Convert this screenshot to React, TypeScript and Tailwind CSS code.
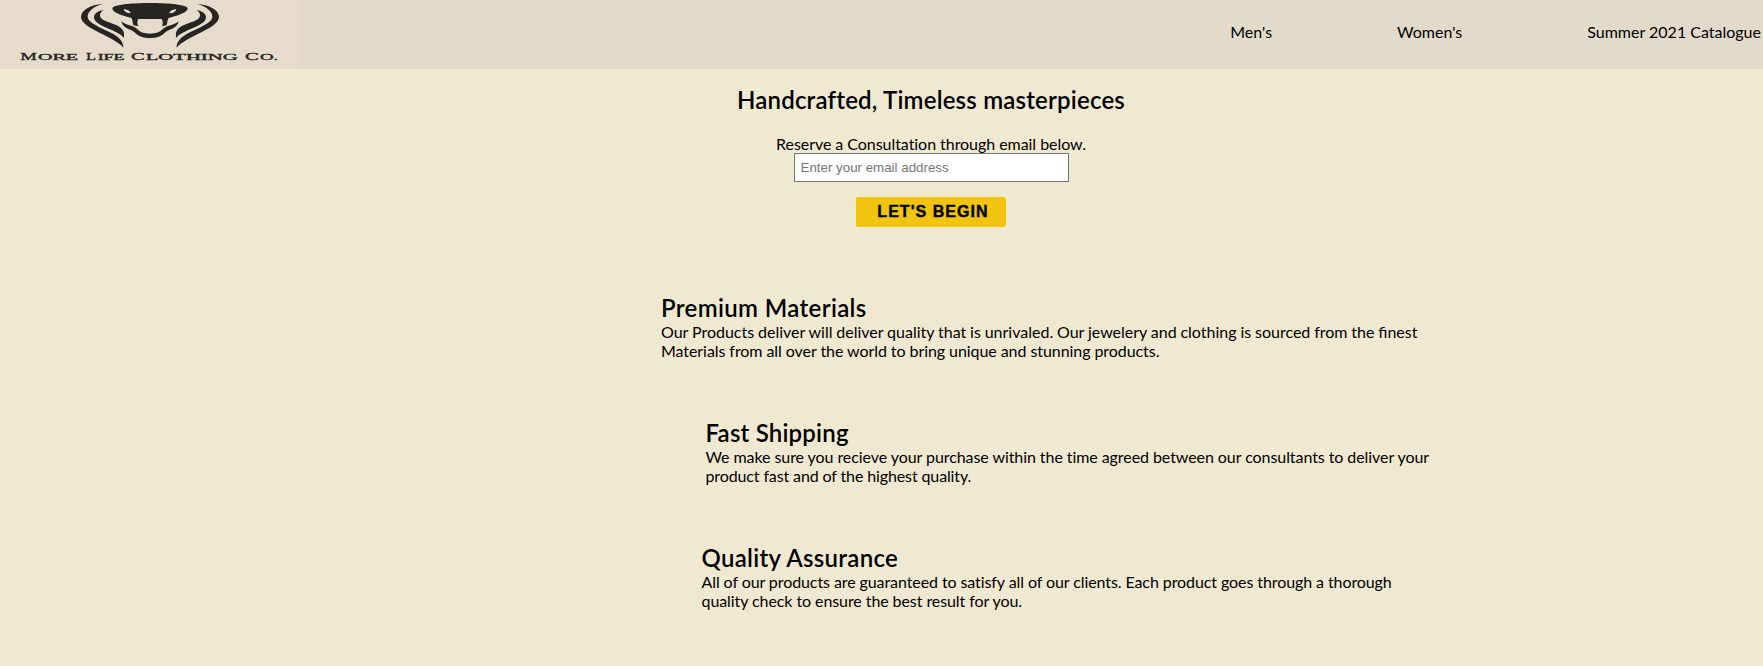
const half = [
  'M309 11 C272 15 243 29 243 51 C244 70 270 84 308 103 C340 119 360 131 370 143 C371 129 362 115 340 102 C310 86 264 70 263 51 C262 34 280 20 309 11 Z',
  'M311 30 C292 33 281 42 282 53 C284 68 306 77 330 88 C350 97 365 104 371 114 C375 97 370 86 350 76 C330 66 306 63 301 51 C298 42 301 36 311 30 Z',
];

const features = [
  {
    title: 'Premium Materials',
    offset: 'ml-[661px]',
    heading: 'tracking-[0.36px]',
    lines: [
      { text: 'Our Products deliver will deliver quality that is unrivaled. Our jewelery and clothing is sourced from the finest', spacing: '[word-spacing:-0.26px]' },
      { text: 'Materials from all over the world to bring unique and stunning products.', spacing: 'tracking-[-0.065px]' },
    ],
  },
  {
    title: 'Fast Shipping',
    offset: 'ml-[705.5px]',
    heading: 'tracking-[0.2px]',
    lines: [
      { text: 'We make sure you recieve your purchase within the time agreed between our consultants to deliver your', spacing: 'tracking-[-0.07px]' },
      { text: 'product fast and of the highest quality.', spacing: 'tracking-[-0.12px]' },
    ],
  },
  {
    title: 'Quality Assurance',
    offset: 'ml-[701.5px]',
    heading: 'tracking-[0.3px]',
    lines: [
      { text: 'All of our products are guaranteed to satisfy all of our clients. Each product goes through a thorough', spacing: 'tracking-[-0.087px]' },
      { text: 'quality check to ensure the best result for you.', spacing: 'tracking-[-0.08px]' },
    ],
  },
];

const words = [
  { first: 'M', rest: 'ORE', x: 61, w: 50, rx: 114, rw: 120 },
  { first: 'L', rest: 'IFE', x: 258, w: 30, rx: 293, rw: 80 },
  { first: 'C', rest: 'LOTHING', x: 393, w: 41, rx: 437, rw: 276 },
  { first: 'C', rest: 'O.', x: 735, w: 41, rx: 780, rw: 55 },
];

function Logo() {
  return (
    <svg className="h-[69px] w-[299px] shrink-0 bg-[#e6dccc]" viewBox="0 0 897 207" fill="#272522">
      {half.map((d) => <path key={d} d={d} />)}
      <g transform="translate(900 0) scale(-1 1)">
        {half.map((d) => <path key={d} d={d} />)}
      </g>
      <path d="M450 9 C400 9 350 13 339 22 C331 31 350 44 394 54 C400 64 397 72 401 76 L416 79 C410 71 412 62 415 57 L485 57 C488 62 490 71 486 79 L499 76 C503 72 500 64 506 54 C550 44 569 31 561 22 C550 13 500 9 450 9 Z" />
      <path d="M364 64 C367 77 375 84 391 89 C409 95 410 114 450 114 C490 114 491 95 509 89 C525 84 533 77 536 64 C526 72 516 75 502 79 C484 85 486 101 450 101 C414 101 416 85 398 79 C384 75 374 72 364 64 Z" />
      <path fill="#e6dccc" d="M371 27 C382 29 392 34 392 39 C382 41 373 36 371 27 Z M529 27 C518 29 508 34 508 39 C518 41 527 36 529 27 Z" />
      <g fontFamily="'Liberation Serif', serif" stroke="#272522" strokeWidth="1">
        {words.map((w) => (
          <g key={w.x}>
            <text x={w.x} y="180" fontSize="32" textLength={w.w} lengthAdjust="spacingAndGlyphs">{w.first}</text>
            <text x={w.rx} y="180" fontSize="26" textLength={w.rw} lengthAdjust="spacingAndGlyphs">{w.rest}</text>
          </g>
        ))}
      </g>
    </svg>
  );
}

export default function App() {
  return (
    <div className="h-[666px] w-full overflow-hidden bg-[#f0e9d2] font-['Lato',sans-serif] text-base leading-[19px] text-black">
      <header className="flex h-[69px] justify-between bg-[#e2dbcb]">
        <Logo />
        <nav className="flex gap-[125px] pt-[22px] pr-0.5 whitespace-nowrap">
          <a>Men's</a>
          <a>Women's</a>
          <a>Summer 2021 Catalogue</a>
        </nav>
      </header>
      <main>
        <section className="ml-[99px] flex flex-col items-center pt-4">
          <h1 className="text-2xl leading-[29px] font-semibold tracking-[0.2px]">Handcrafted, Timeless masterpieces</h1>
          <p className="mt-5 h-[19px] tracking-[-0.05px]">Reserve a Consultation through email below.</p>
          <input
            className="h-[29px] w-[275px] border border-[#767676] bg-white px-1.5 font-['Liberation_Sans',sans-serif] text-[13.333px] placeholder:text-[#757575]"
            placeholder="Enter your email address"
          />
          <button className="mt-[15px] h-[30px] w-[150px] rounded-xs bg-[#f1c40f] pl-1 font-['Liberation_Sans',sans-serif] text-base font-black tracking-[1.05px] [-webkit-text-stroke:0.4px_black]">
            LET'S BEGIN
          </button>
        </section>
        <div className="mt-[66px] flex flex-col gap-[58px] whitespace-nowrap">
          {features.map((f) => (
            <section key={f.title} className={f.offset}>
              <h2 className={`text-2xl leading-[29px] font-semibold ${f.heading}`}>{f.title}</h2>
              {f.lines.map((line) => (
                <p key={line.text} className={line.spacing}>{line.text}</p>
              ))}
            </section>
          ))}
        </div>
      </main>
    </div>
  );
}
